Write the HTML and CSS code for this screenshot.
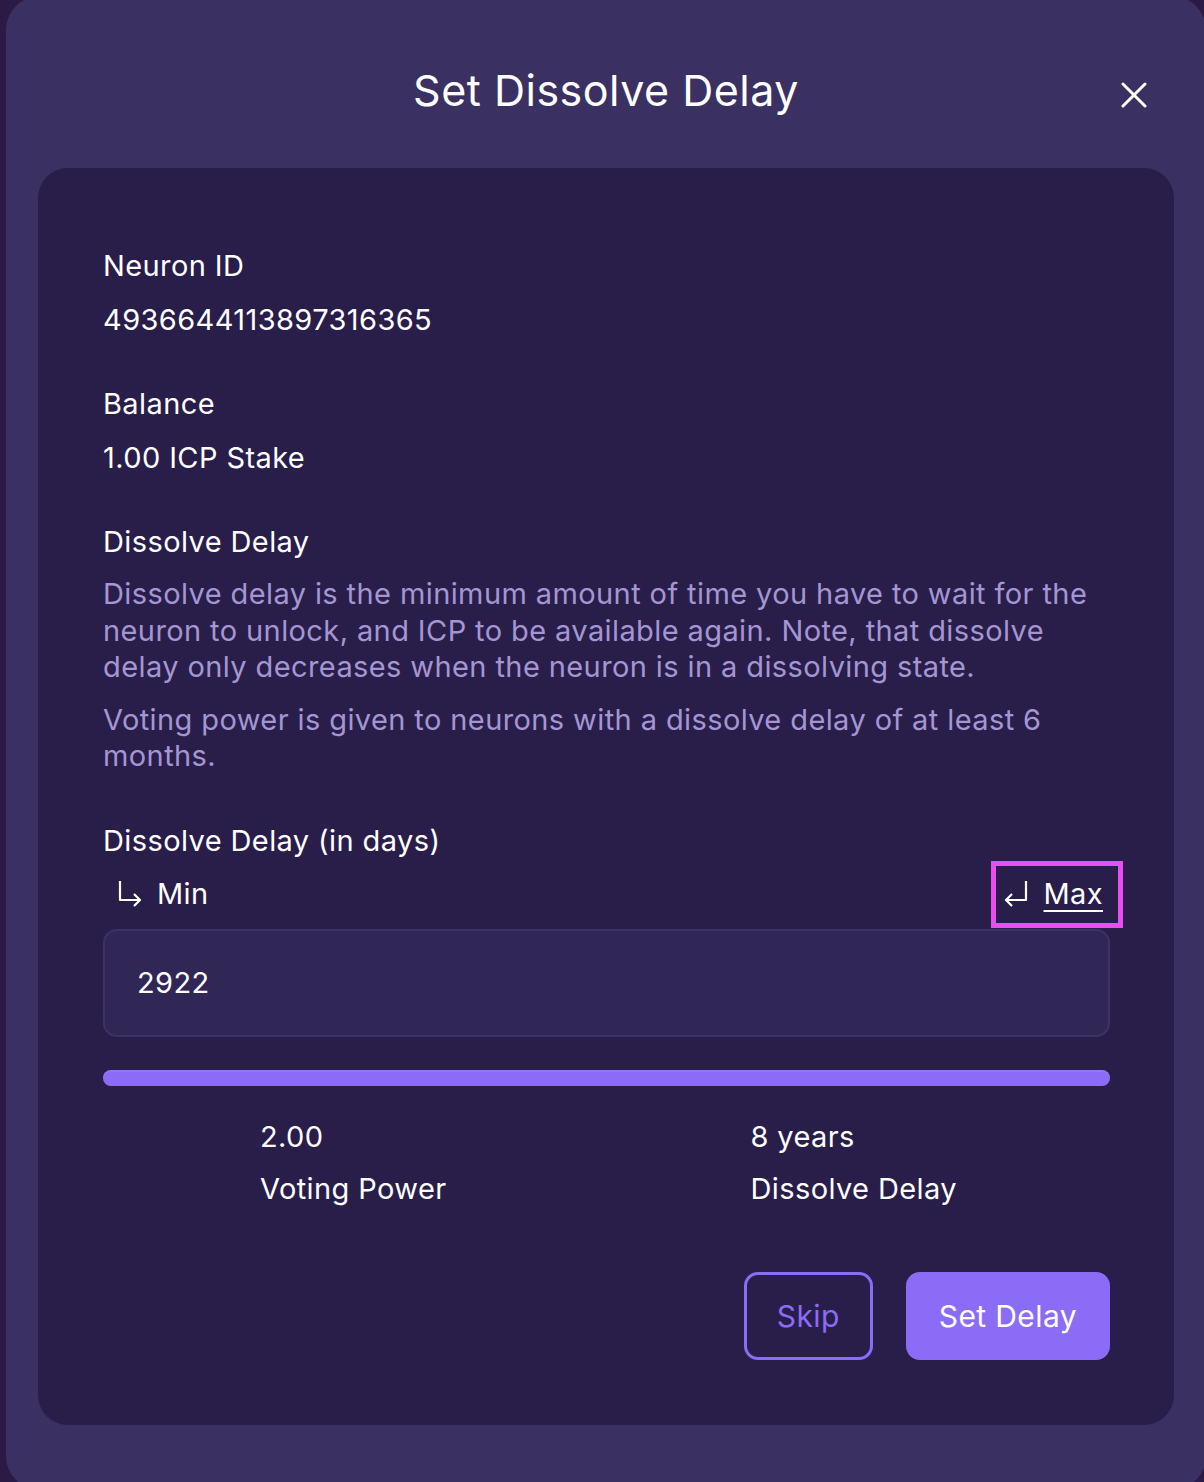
FILE: index.html
```html
<!DOCTYPE html>
<html lang="en">
<head>
  <meta charset="UTF-8" />
  <meta name="viewport" content="width=device-width, initial-scale=1.0" />
  <title>Set Dissolve Delay</title>
  <link rel="stylesheet" href="styles.css"/>
</head>
<body>

  <div class="modal">
    <header class="modal-header">
      <span></span>
      <h1>Set Dissolve Delay</h1>
      <button class="close" aria-label="Close">
        <svg width="26" height="26" viewBox="0 0 26 26"><path d="M2 2 L24 24 M24 2 L2 24" stroke="#fff" stroke-width="3" stroke-linecap="round"/></svg>
      </button>
    </header>

    <main class="card">
      <section class="field">
        <h3>Neuron ID</h3>
        <p>4936644113897316365</p>
      </section>

      <section class="field">
        <h3>Balance</h3>
        <p>1.00 ICP Stake</p>
      </section>

      <section class="field info">
        <h3>Dissolve Delay</h3>
        <p class="desc">Dissolve delay is the minimum amount of time you have to wait for the neuron to unlock, and ICP to be available again. Note, that dissolve delay only decreases when the neuron is in a dissolving state.</p>
        <p class="desc">Voting power is given to neurons with a dissolve delay of at least 6 months.</p>
      </section>

      <section class="delay">
        <label for="delay-days">Dissolve Delay (in days)</label>
        <div class="range-links">
          <button class="link">
            <svg width="26" height="28" viewBox="0 0 26 28"><path d="M3 1 V20 H23 M17 14 L23 20 L17 26" fill="none" stroke="#fff" stroke-width="2.2" stroke-linejoin="round"/></svg>
            Min
          </button>
          <button class="link max">
            <svg width="26" height="28" viewBox="0 0 26 28"><path d="M23 1 V20 H3 M9 14 L3 20 L9 26" fill="none" stroke="#fff" stroke-width="2.2" stroke-linejoin="round"/></svg>
            <u>Max</u>
          </button>
        </div>
        <input class="delay-input" id="delay-days" type="text" value="2922" />
        <div class="slider"><div class="slider-fill" style="width: 100%;"></div></div>
      </section>

      <section class="stats">
        <div class="stat">
          <p>2.00</p>
          <p>Voting Power</p>
        </div>
        <div class="stat">
          <p>8 years</p>
          <p>Dissolve Delay</p>
        </div>
      </section>

      <div class="actions">
        <button class="btn outline">Skip</button>
        <button class="btn primary">Set Delay</button>
      </div>
    </main>
  </div>

</body>
</html>
```

FILE: styles.css
```css
:root {
  --page-bg: #2b1946;
  --modal-bg: #3a3162;
  --card-bg: #291e4a;
  --input-bg: #302756;
  --purple: #8b6cf6;
  --muted: #a496d2;
  --focus: #e94ff0;
}

* {
  margin: 0;
  padding: 0;
  box-sizing: border-box;
  font-family: 'Inter', 'Open Sans', sans-serif;
  letter-spacing: 0.4px;
}

body {
  background: var(--page-bg);
  color: #fff;
  padding-left: 6px;
  overflow: hidden;
  height: 1482px;
}

/* Modal shell */
.modal {
  width: 1200px;
  margin-top: -4px;
  height: 1494px;
  background: var(--modal-bg);
  border-radius: 34px;
  padding: 0 32px;
}

.modal-header {
  height: 172px;
  padding-top: 16px;
  display: grid;
  grid-template-columns: 1fr auto 1fr;
  align-items: center;
}

.modal-header h1 {
  font-size: 43px;
  font-weight: 400;
  letter-spacing: 0.5px;
}

.close {
  justify-self: end;
  margin-right: 27px;
  margin-top: 9px;
  background: none;
  border: none;
  display: flex;
}

/* Inner card */
.card {
  background: var(--card-bg);
  border-radius: 30px;
  padding: 80px 64px 65px 65px;
}

.field h3,
.field p,
.delay label,
.link,
.stat p {
  font-size: 29px;
  font-weight: 400;
  line-height: 36px;
}

.field p {
  margin-top: 18px;
}

.field + .field {
  margin-top: 48px;
}

.field .desc {
  color: var(--muted);
  line-height: 36.5px;
  margin-top: 16px;
}

.field .desc + .desc {
  margin-top: 16px;
}

/* Delay input */
.delay {
  margin-top: 48px;
}

.delay label {
  display: block;
}

.range-links {
  display: flex;
  justify-content: space-between;
  align-items: center;
  margin: 7px 0 6px;
}

.link {
  display: flex;
  align-items: center;
  gap: 14px;
  background: none;
  border: none;
  color: #fff;
  padding: 10px 14px 11px 14px;
}

.link.max {
  padding: 10px 15px 11px 7px;
  margin-right: -8px;
  outline: 5px solid var(--focus);
}

.link u {
  text-underline-offset: 6px;
  text-decoration-thickness: 2px;
}

.delay-input {
  display: block;
  width: 100%;
  height: 108px;
  background: var(--input-bg);
  border: 2px solid #3c3264;
  border-radius: 14px;
  padding: 0 32px;
  color: #fff;
  font-size: 29px;
}

.slider {
  margin-top: 33px;
  height: 16px;
  border-radius: 8px;
  background: #4a3f7a;
}

.slider-fill {
  height: 100%;
  border-radius: 8px;
  background: var(--purple);
  box-shadow: inset 0 2px 0 rgba(255, 255, 255, 0.08);
}

/* Stats */
.stats {
  display: grid;
  grid-template-columns: 1fr 1fr;
  justify-items: center;
  margin-top: 33px;
  padding-right: 6px;
}

.stat p + p {
  margin-top: 16px;
}

/* Buttons */
.actions {
  display: flex;
  justify-content: flex-end;
  gap: 33px;
  margin-top: 65px;
}

.btn {
  height: 88px;
  padding: 0 30px;
  font-size: 30px;
  border-radius: 14px;
  border: 3px solid var(--purple);
  cursor: pointer;
}

.btn.outline {
  background: transparent;
  color: var(--purple);
}

.btn.primary {
  background: var(--purple);
  color: #fff;
}
```
